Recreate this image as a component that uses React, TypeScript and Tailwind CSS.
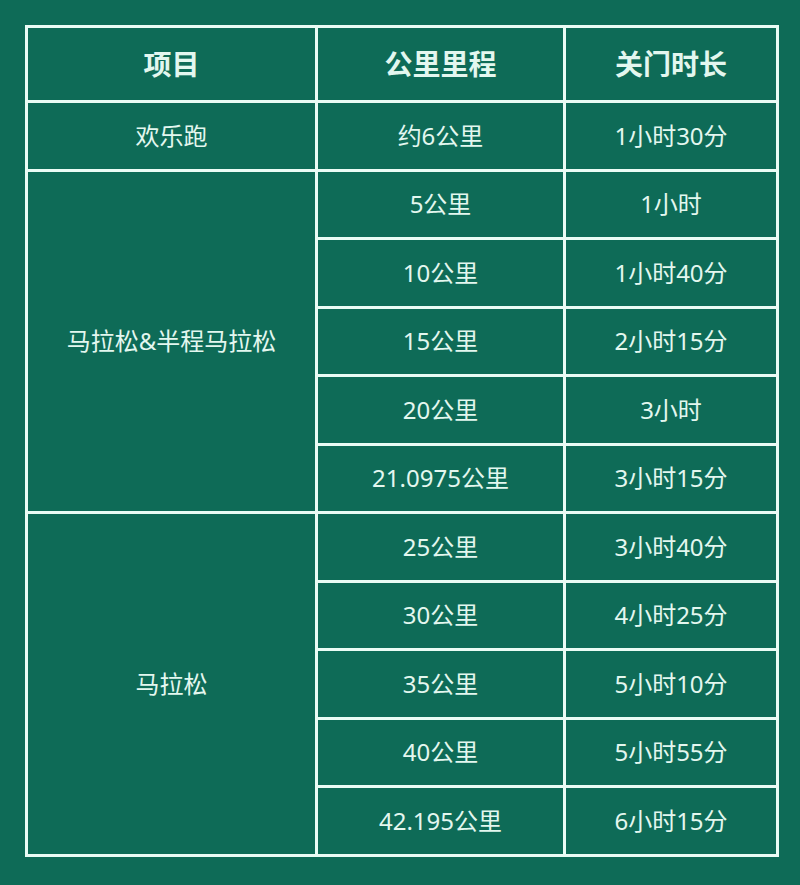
const rows: { group?: string; span?: number; dist: string; time: string }[] = [
  { group: '欢乐跑', span: 1, dist: '约6公里', time: '1小时30分' },
  { group: '马拉松&半程马拉松', span: 5, dist: '5公里', time: '1小时' },
  { dist: '10公里', time: '1小时40分' },
  { dist: '15公里', time: '2小时15分' },
  { dist: '20公里', time: '3小时' },
  { dist: '21.0975公里', time: '3小时15分' },
  { group: '马拉松', span: 5, dist: '25公里', time: '3小时40分' },
  { dist: '30公里', time: '4小时25分' },
  { dist: '35公里', time: '5小时10分' },
  { dist: '40公里', time: '5小时55分' },
  { dist: '42.195公里', time: '6小时15分' },
];

export default function App() {
  const cell = 'border-[3px] border-[#eafcf5] text-center align-middle';
  return (
    <div
      className="min-h-[885px] w-full bg-[#0e6b57] pt-[25px] pl-[25px] text-[#e3f7ef]"
      style={{ fontFamily: '"Noto Sans", "Noto Sans CJK SC", sans-serif' }}
    >
      <table className="w-[751px] table-fixed border-collapse">
        <colgroup>
          <col className="w-[290px]" />
          <col className="w-[248px]" />
          <col className="w-[213px]" />
        </colgroup>
        <thead>
          <tr className="h-[75px]">
            <th className={`${cell} text-[28px] font-bold`}>项目</th>
            <th className={`${cell} text-[28px] font-bold`}>公里里程</th>
            <th className={`${cell} text-[28px] font-bold`}>关门时长</th>
          </tr>
        </thead>
        <tbody>
          {rows.map((r, i) => (
            <tr key={i} className="h-[68.5px] text-[24px]">
              {r.group && (
                <td rowSpan={r.span} className={cell}>
                  {r.group}
                </td>
              )}
              <td className={cell}>{r.dist}</td>
              <td className={cell}>{r.time}</td>
            </tr>
          ))}
        </tbody>
      </table>
    </div>
  );
}
